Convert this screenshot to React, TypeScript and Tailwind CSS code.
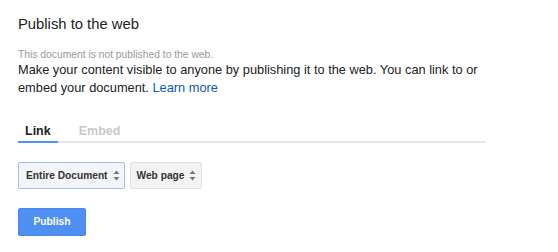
function UpDown() {
  return (
    <svg width="7" height="11" viewBox="0 0 7 11" className="ml-[5px] fill-[#777]">
      <path d="M3.5 0.5 L6.5 4 L0.5 4 Z" />
      <path d="M3.5 10.5 L6.5 7 L0.5 7 Z" />
    </svg>
  )
}

function App() {
  return (
    <div className="h-[252px] w-[558px] bg-white pl-[18px] pt-[13px] font-['Liberation_Sans',Arial,sans-serif] text-[#222]">
      <h1 className="text-[14.8px] leading-[22px] text-[#222]">Publish to the web</h1>

      <div className="w-[468px]">
        <p className="mt-[14px] text-[10.3px] leading-[12px] text-[#999]">
          This document is not published to the web.
        </p>
        <p className="mt-[0px] text-[12.8px] leading-[18px] text-[#222]">
          Make your content visible to anyone by publishing it to the web. You can link to or
          embed your document.{' '}
          <a href="#" className="text-[#1155cc]">
            Learn more
          </a>
        </p>

        <div className="mt-[27px] flex border-b-2 border-[#e5e5e5] text-[12.5px] font-bold leading-[15px]">
          <div className="-mb-[2px] border-b-2 border-[#4d90fe] px-[7px] pb-[2px]">Link</div>
          <div className="px-[21px] pb-[2px] text-[#c8c8c8]">Embed</div>
        </div>
      </div>

      <div className="mt-[19px] flex gap-[5px] text-[10.2px] font-bold text-[#333]">
        <div className="flex h-[27px] items-center rounded-[2px] border border-[#a3c0f3] bg-[#f4f5f8] pl-[7px] pr-[4px]">
          Entire Document
          <UpDown />
        </div>
        <div className="flex h-[27px] items-center rounded-[2px] border border-[#e0e0e0] bg-[#f3f3f3] pl-[6px] pr-[5px]">
          Web page
          <UpDown />
        </div>
      </div>

      <button className="mt-[19px] flex h-[28px] w-[68px] items-center justify-center rounded-[2px] border border-[#4a86ef] bg-[#4d8ff3] text-[10.3px] font-bold text-white">
        Publish
      </button>
    </div>
  )
}

export default App
